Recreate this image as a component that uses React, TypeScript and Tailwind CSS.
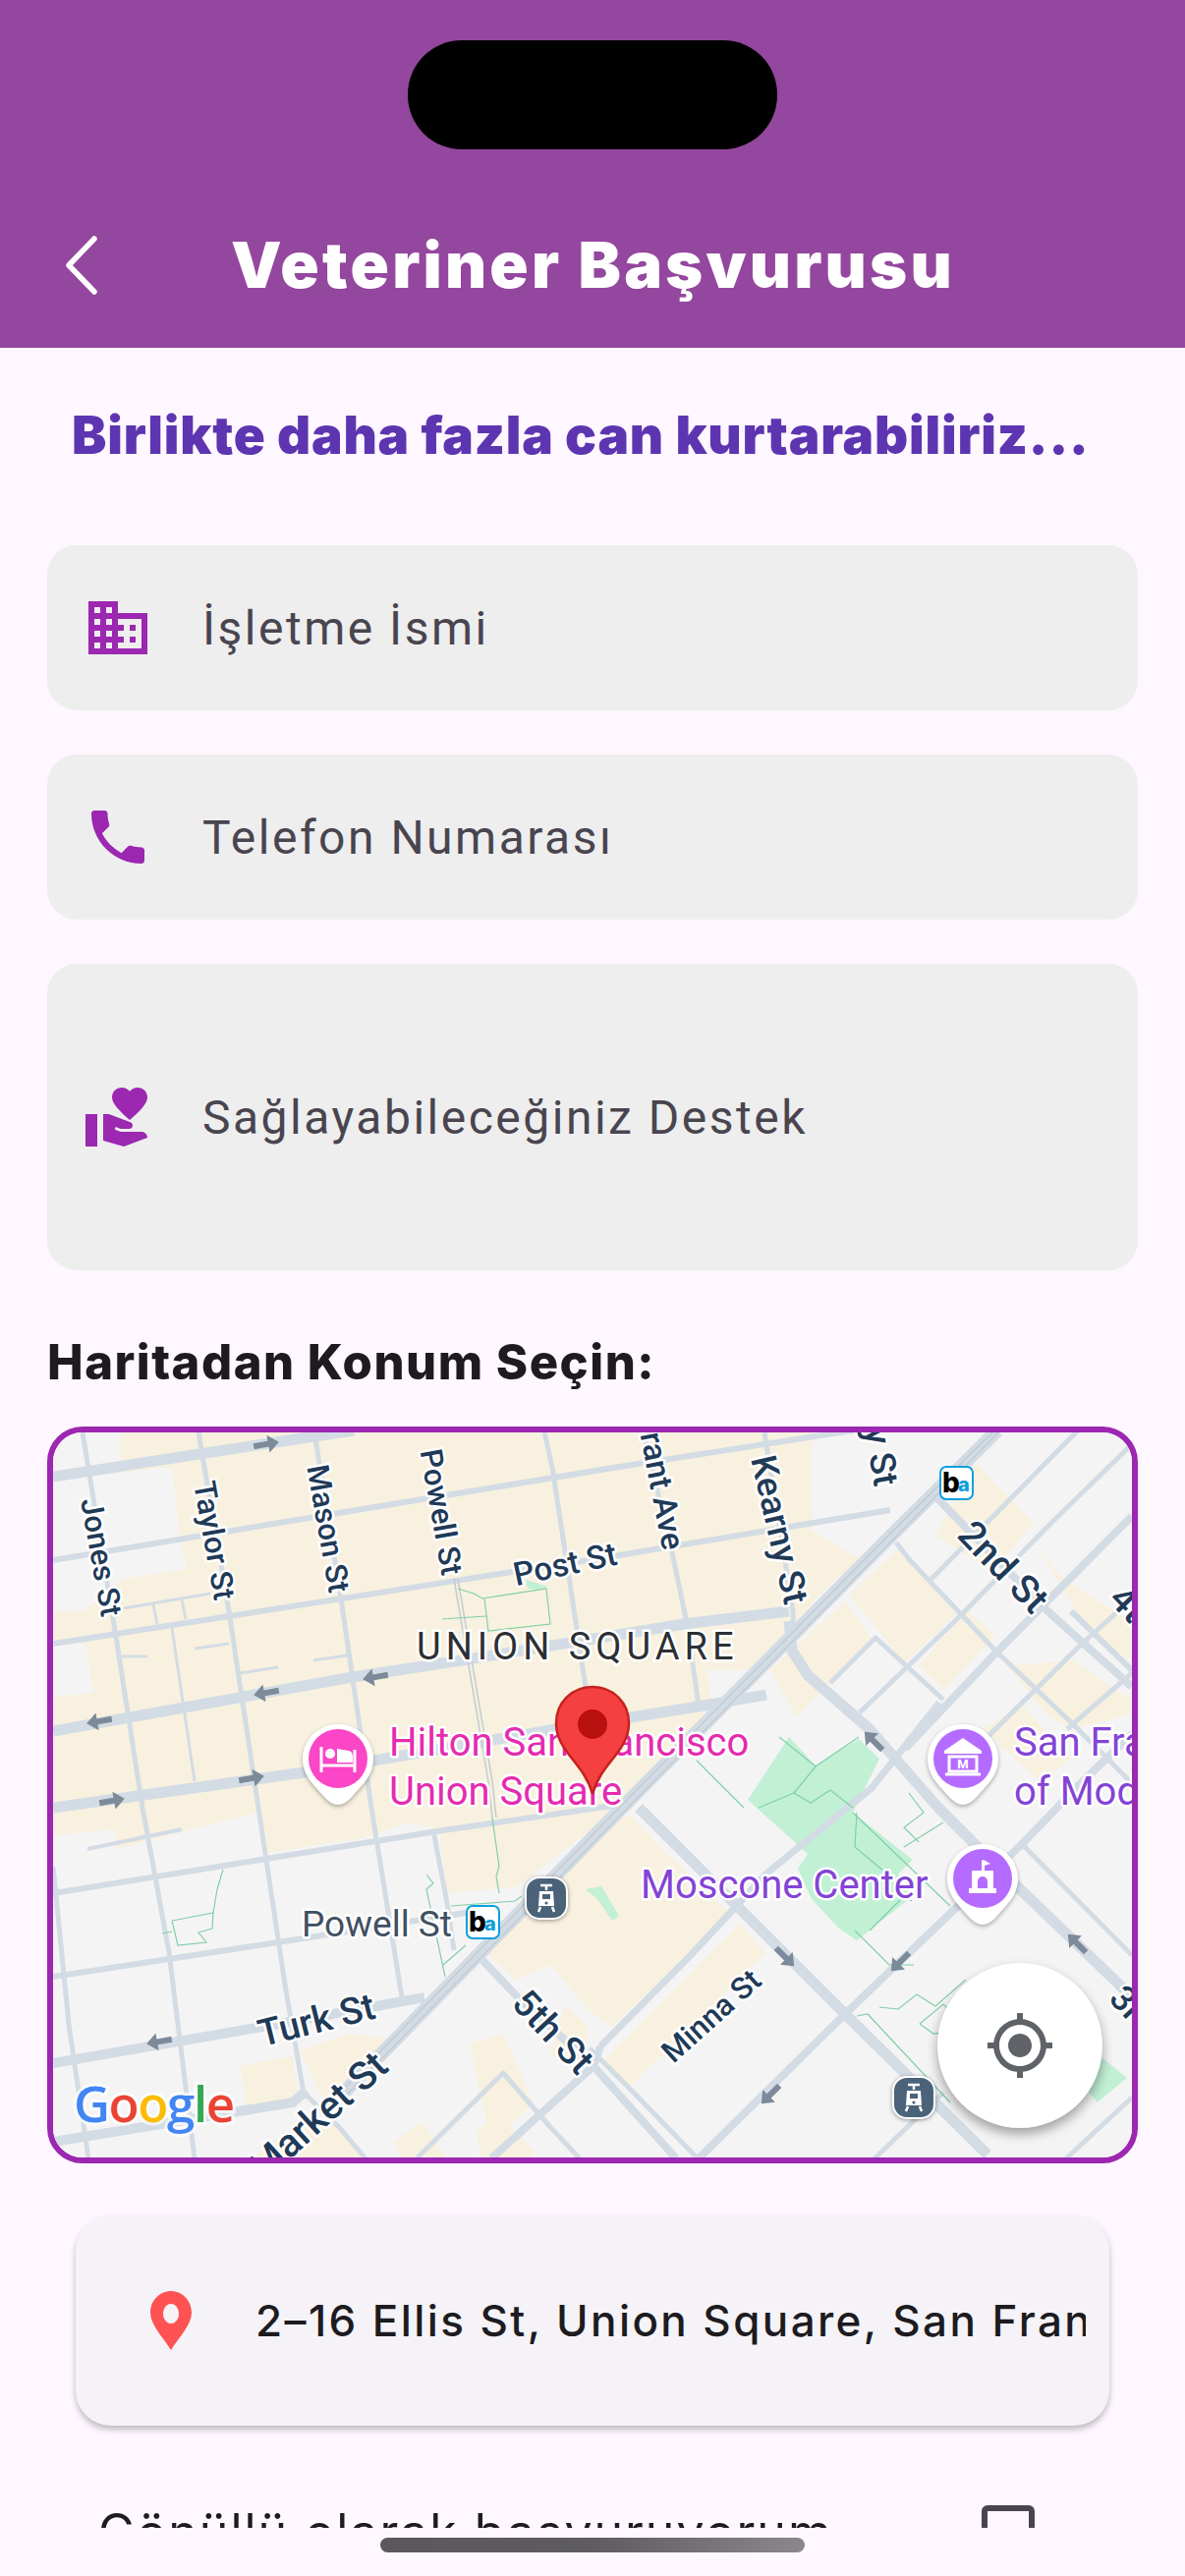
import React from 'react';

// Map data is in page pixels, the svg viewBox is the inner rect of the map frame.
type Pt = [number, number];

const BEIGE: Pt[][] = [
  [[122,1458],[640,1458],[826,1458],[826,1557],[875,1587],[830,1627],[784,1700],[720,1700],[725,1745],[630,1840],[527,1920],[455,1927],[447,1863],[416,1855],[374,1870],[267,1887],[262,1845],[118,1882],[118,1862],[54,1868],[54,1727],[95,1723],[87,1673],[54,1673],[54,1640],[84,1640],[126,1607],[190,1597],[183,1563],[175,1493],[54,1507],[54,1500],[122,1490]],
  [[784,1700],[860,1630],[887,1667],[845,1713],[810,1747]],
  [[864,1623],[914,1577],[973,1643],[921,1693]],
  [[994,1490],[1052,1550],[1010,1600],[952,1563]],
  [[1055,1573],[1082,1607],[1151,1650],[1151,1690],[1110,1665]],
  [[985,1640],[1013,1665],[960,1720],[935,1695]],
  [[1025,1695],[1092,1690],[1151,1730],[1151,1745],[1090,1760],[1065,1745]],
  [[1000,1760],[1040,1735],[1090,1790],[1060,1815]],
  [[497,1990],[630,1850],[642,1848],[673,1880],[742,1947],[707,1983],[623,2063],[600,2047],[560,2000],[525,2015]],
  [[753,1958],[780,1987],[640,2125],[615,2097]],
  [[244,2103],[298,2093],[304,2140],[252,2153]],
  [[305,2087],[355,2070],[400,2075],[330,2140]],
  [[252,2197],[336,2153],[374,2197]],
  [[478,2080],[512,2070],[543,2140],[500,2183]],
  [[485,2170],[505,2150],[545,2190],[540,2197],[490,2197]],
  [[400,2180],[430,2160],[455,2197],[410,2197]],
  [[575,2040],[600,2065],[590,2110],[560,2090]],
];

const PARKS: Pt[][] = [
  [[761,1832],[803,1768],[830,1797],[874,1770],[895,1790],[868,1845],[929,1893],[914,1907],[929,1930],[872,1975],[853,1962],[826,1933],[812,1902],[822,1887],[790,1858]],
  [[1120,2093],[1147,2115],[1117,2140],[1100,2120]],
  [[535,1608],[558,1615],[547,1618],[537,1617]],
  [[596,1923],[612,1920],[630,1950],[623,1955],[608,1933]],
];

const ROADS: { w: number; pts: Pt[] }[] = [
  // east-west, left grid
  { w: 11, pts: [[54,1503],[267,1470],[360,1456]] },
  { w: 6, pts: [[54,1588],[630,1493],[868,1456]] },
  { w: 6, pts: [[54,1673],[630,1583],[906,1537]] },
  { w: 11, pts: [[54,1762],[359,1707],[470,1690],[696,1653],[803,1640]] },
  { w: 11, pts: [[54,1840],[317,1803],[566,1760],[711,1737],[780,1725]] },
  { w: 6, pts: [[54,1927],[451,1863],[630,1837]] },
  { w: 6, pts: [[54,2012],[283,1977],[474,1947]] },
  { w: 10, pts: [[54,2100],[267,2063],[432,2033]] },
  { w: 10, pts: [[54,2180],[298,2140],[312,2128]] },
  // alleys
  { w: 3, pts: [[126,1637],[214,1622]] },
  { w: 3, pts: [[124,1686],[150,1686]] },
  { w: 3, pts: [[198,1678],[233,1673]] },
  { w: 3, pts: [[244,1703],[283,1697]] },
  { w: 3, pts: [[319,1690],[353,1685]] },
  { w: 4, pts: [[89,1882],[185,1862]] },
  { w: 3, pts: [[175,1657],[198,1813]] },
  { w: 3, pts: [[156,1633],[160,1653]] },
  { w: 3, pts: [[185,1628],[189,1648]] },
  // north-south, left grid
  { w: 5, pts: [[84,1458],[116,1653],[145,1840],[172,1987],[198,2197]] },
  { w: 5, pts: [[202,1458],[233,1640],[263,1840],[290,2020],[309,2130],[345,2165],[372,2197]] },
  { w: 5, pts: [[320,1458],[347,1627],[378,1840],[409,2033],[414,2040]] },
  { w: 5, pts: [[441,1863],[455,1937],[462,1985]] },
  { w: 5, pts: [[554,1458],[562,1493],[596,1717]] },
  { w: 5, pts: [[655,1458],[684,1580],[700,1657],[711,1737],[716,1740]] },
  { w: 5, pts: [[54,1900],[70,2060],[90,2197]] },
  // Kearny curling into the thick diagonal
  { w: 5, pts: [[778,1458],[807,1640],[808,1680]] },
  { w: 11, pts: [[803,1650],[806,1680],[822,1705],[885,1760],[955,1840],[1032,1917],[1136,2017],[1152,2033]] },
  { w: 11, pts: [[650,1840],[860,2050],[1005,2193]] },
  // north-east diagonals
  { w: 5, pts: [[948,1607],[1097,1456]] },
  { w: 5, pts: [[845,1713],[891,1667],[960,1730]] },
  { w: 5, pts: [[875,1743],[975,1647],[1070,1550],[1152,1470]] },
  { w: 8, pts: [[921,1780],[1013,1683],[1152,1543]] },
  { w: 5, pts: [[1006,1767],[1097,1677],[1152,1627]] },
  { w: 5, pts: [[1086,1760],[1152,1703]] },
  { w: 7, pts: [[611,2083],[703,1990],[780,1907],[887,1820],[956,1733]] },
  { w: 8, pts: [[711,2197],[860,2050],[975,1940],[1040,1877],[1100,1815],[1152,1765]] },
  { w: 8, pts: [[500,2197],[604,2103],[611,2083]] },
  { w: 5, pts: [[424,2197],[512,2110],[560,2165],[590,2197]] },
  { w: 5, pts: [[890,2197],[960,2130]] },
  { w: 5, pts: [[1085,2197],[1152,2135]] },
  // north-west diagonals
  { w: 5, pts: [[912,1570],[925,1587],[1013,1680],[1090,1753],[1152,1815]] },
  { w: 8, pts: [[952,1523],[1063,1637],[1152,1717]] },
  { w: 6, pts: [[1090,1640],[1152,1700]] },
  { w: 8, pts: [[489,1993],[527,2033],[604,2103],[688,2197]] },
  { w: 5, pts: [[600,2085],[640,2125],[710,2197]] },
  { w: 5, pts: [[1040,1877],[1152,1990]] },
  // Market St
  { w: 14, pts: [[340,2140],[630,1843],[906,1564],[1015,1456]] },
];

const RAILS: Pt[][] = [
  [[340,2136],[630,1840],[906,1561],[1012,1456]],
  [[345,2140],[634,1845],[910,1566],[1018,1456]],
  [[462,1607],[497,1813],[501,1850]],
  [[466,1607],[501,1813],[505,1850]],
];

const PATHS: Pt[][] = [
  [[466,1617],[482,1622],[491,1627],[556,1617],[560,1653],[497,1660],[493,1627]],
  [[450,1648],[495,1645]],
  [[175,1955],[217,1947],[216,1963],[202,1967],[210,1977],[181,1980],[175,1955]],
  [[217,1947],[221,1923],[227,1903]],
  [[165,1968],[175,1966]],
  [[434,1908],[441,1917],[434,1923],[453,2012]],
  [[459,1940],[524,1935],[531,1930]],
  [[451,2000],[474,1980]],
  [[501,1850],[508,1900],[505,1910],[508,1927]],
  [[709,1792],[757,1840]],
  [[793,1768],[830,1798],[874,1768]],
  [[830,1798],[808,1825],[825,1835],[845,1822],[868,1840]],
  [[772,1840],[808,1825]],
  [[868,1845],[967,1940]],
  [[872,1845],[870,1880],[900,1905]],
  [[920,1880],[960,1855]],
  [[925,1825],[940,1845],[920,1860],[935,1875]],
  [[870,1965],[905,2000],[930,2000]],
  [[885,1965],[920,1930],[928,1935]],
  [[872,2052],[883,2050],[967,2140]],
  [[895,2043],[914,2045],[933,2030],[952,2042],[983,2015]],
  [[936,2060],[950,2070],[985,2065],[960,2040],[936,2060]],
];

const ARROWS: [number, number, number][] = [
  [271,1470,-10],[382,1707,170],[271,1723,170],[101,1752,170],[256,1810,-10],[114,1833,-10],
  [162,2078,170],[889,1772,225],[1096,1978,225],[799,1992,45],[916,1997,135],[784,2132,135],
];

const LABELS: { t: string; x: number; y: number; r: number; s: number; end?: boolean }[] = [
  { t: 'Jones St', x: 103, y: 1585, r: 80, s: 31 },
  { t: 'Taylor St', x: 218, y: 1568, r: 80, s: 31 },
  { t: 'Mason St', x: 334, y: 1556, r: 80, s: 31 },
  { t: 'Powell St', x: 449, y: 1539, r: 80, s: 31 },
  { t: 'Post St', x: 575, y: 1592, r: -12, s: 33 },
  { t: 'Grant Ave', x: 686, y: 1577, r: 79, s: 33, end: true },
  { t: 'Kearny St', x: 793, y: 1557, r: 77, s: 36 },
  { t: 'Montgomery St', x: 902, y: 1512, r: 80, s: 36, end: true },
  { t: '2nd St', x: 1021, y: 1595, r: 46, s: 39 },
  { t: '4th St', x: 1136, y: 1620, r: 46, s: 38, end: false },
  { t: 'Turk St', x: 322, y: 2056, r: -14, s: 38 },
  { t: 'Market St', x: 388, y: 2096, r: -42, s: 40, end: true },
  { t: '5th St', x: 563, y: 2068, r: 47, s: 38 },
  { t: 'Minna St', x: 724, y: 2052, r: -42, s: 31 },
  { t: '3rd St', x: 1136, y: 2027, r: 47, s: 36, end: false },
];

const line = (pts: Pt[]) => pts.map(p => p.join(',')).join(' ');

const PIN_SHAPE =
  'M0 -35C20 -35 36 -19 36 0C36 18 24 27 15 38Q7 47 0 47Q-7 47 -15 38C-24 27 -36 18 -36 0C-36 -19 -20 -35 0 -35Z';

function Poi({ x, y, fill, children }: { x: number; y: number; fill: string; children: React.ReactNode }) {
  return (
    <g transform={`translate(${x} ${y})`}>
      <path d={PIN_SHAPE} fill="#fff" className="[filter:drop-shadow(0_2px_2px_rgba(0,0,0,0.3))]" />
      <circle r="30" cy="0" fill={fill} />
      {children}
    </g>
  );
}

function Bart({ x, y }: { x: number; y: number }) {
  return (
    <g transform={`translate(${x} ${y})`}>
      <rect x="1" y="1" width="33" height="33" rx="6" fill="#fff" stroke="#0b9fdc" strokeWidth="2" />
      <text x="3" y="27" fontSize="28" fontWeight="800" fill="#000" className="font-['Inter',sans-serif]">b</text>
      <text x="19" y="26" fontSize="20" fontWeight="800" fill="#0b9fdc" className="font-['Inter',sans-serif]">a</text>
    </g>
  );
}

function Tram({ x, y }: { x: number; y: number }) {
  return (
    <g transform={`translate(${x} ${y})`}>
      <rect x="1" y="1" width="42" height="42" rx="14" fill="#4b6379" stroke="#fff" strokeWidth="2" className="[filter:drop-shadow(0_1px_2px_rgba(0,0,0,0.4))]" />
      <path d="M16 9h12M22 9v5" fill="none" stroke="#fff" strokeWidth="2.5" />
      <path d="M15 15h14l1 15H14z" fill="#fff" />
      <rect x="18" y="18" width="8" height="5" fill="#4b6379" />
      <circle cx="22" cy="27" r="1.6" fill="#4b6379" />
      <path d="M16 31l-2 5M28 31l2 5" stroke="#fff" strokeWidth="2.5" />
    </g>
  );
}

function MapCanvas() {
  return (
    <svg viewBox="54 1458 1098 738" className="block w-full h-full font-['Roboto',sans-serif]">
      <rect x="54" y="1458" width="1098" height="738" fill="#f5f4f5" />
      {BEIGE.map((p, i) => <polygon key={i} points={line(p)} fill="#f8f1df" />)}
      {PARKS.map((p, i) => <polygon key={i} points={line(p)} fill="#c1f0d5" />)}
      {ROADS.map((r, i) => (
        <polyline key={i} points={line(r.pts)} fill="none" stroke="#d3dce4" strokeWidth={r.w} strokeLinejoin="round" />
      ))}
      {RAILS.map((p, i) => <polyline key={i} points={line(p)} fill="none" stroke="#c3cbd3" strokeWidth="1.5" />)}
      {PATHS.map((p, i) => <polyline key={i} points={line(p)} fill="none" stroke="#82cfa9" strokeWidth="1.2" />)}
      {ARROWS.map(([x, y, r], i) => (
        <path key={i} transform={`translate(${x} ${y}) rotate(${r})`} d="M-13 -3H2V-9L13 0L2 9V3H-13Z" fill="#7c8a99" />
      ))}

      {LABELS.map(l => (
        <text
          key={l.t}
          transform={`translate(${l.x} ${l.y}) rotate(${l.r})`}
          textAnchor={l.end === undefined ? 'middle' : l.end ? 'end' : 'start'}
          dominantBaseline="central"
          fontSize={l.s}
          fontWeight="500"
          fill="#1f3a57"
          stroke="#fff"
          strokeWidth="5"
          paintOrder="stroke"
          strokeLinejoin="round"
        >
          {l.t}
        </text>
      ))}

      <text x="424" y="1689" fontSize="38" letterSpacing="5" fill="#2d2f33" stroke="#fff" strokeWidth="5" paintOrder="stroke">UNION SQUARE</text>

      <g fontSize="40" stroke="#fff" strokeWidth="5" paintOrder="stroke" strokeLinejoin="round">
        <g fill="#e52bb0">
          <text x="396" y="1787">Hilton San Francisco</text>
          <text x="396" y="1837">Union Square</text>
        </g>
        <g fill="#8443d6">
          <text x="1032" y="1787">San Francisco Museum</text>
          <text x="1032" y="1837">of Modern Art</text>
          <text x="652" y="1932">Moscone Center</text>
        </g>
        <text x="307" y="1971" fontSize="37" fill="#3f5061">Powell St</text>
      </g>

      <Poi x={344} y={1790} fill="#fa46c7">
        <path d="M-17 -12V14M17 -9V14M-17 7H17" stroke="#fff" strokeWidth="3" fill="none" />
        <circle cx="-8" cy="-5" r="5" fill="#fff" />
        <path d="M-1 -10L11 -8Q15 -7 15 -2V4H-1Z" fill="#fff" />
      </Poi>
      <Poi x={980} y={1790} fill="#b56bff">
        <path d="M0 -21L19 -8V-5H-19V-8Z" fill="#fff" />
        <path d="M-14 -2H14V13H-14Z" fill="none" stroke="#fff" strokeWidth="3" />
        <path d="M-18 16H18" stroke="#fff" strokeWidth="3" />
        <text x="0" y="10" textAnchor="middle" fontSize="13" fontWeight="800" fill="#fff">M</text>
      </Poi>
      <Poi x={1000} y={1912} fill="#b56bff">
        <path d="M-1 -18V-8H-11V10H-14V15H14V10H11V-8H2V-13L8 -15L1 -19Z" fill="#fff" />
        <path d="M-5 10V3A5 5 0 0 1 5 3V10Z" fill="#b56bff" />
      </Poi>

      <Bart x={956} y={1492} />
      <Bart x={474} y={1939} />
      <Tram x={534} y={1910} />
      <Tram x={908} y={2113} />

      <g transform="translate(603 1755)">
        <path d="M0 -38C21 -38 37 -22 37 -1C37 28 8 40 0 71C-8 40 -37 28 -37 -1C-37 -22 -21 -38 0 -38Z" fill="#f44040" stroke="#c5221f" strokeWidth="2.5" />
        <circle r="15" fill="#b91010" />
      </g>

      <text x="75" y="2160" fontSize="51" fontWeight="600" stroke="#fff" strokeOpacity="0.7" strokeWidth="6" paintOrder="stroke" letterSpacing="-1.4" className="font-['Open_Sans',sans-serif]">
        <tspan fill="#4285f4">G</tspan>
        <tspan fill="#ea4335">o</tspan>
        <tspan fill="#fbbc05">o</tspan>
        <tspan fill="#4285f4">g</tspan>
        <tspan fill="#34a853">l</tspan>
        <tspan fill="#ea4335">e</tspan>
      </text>
    </svg>
  );
}

function Field({ label, icon, tall }: { label: string; icon: string; tall?: boolean }) {
  return (
    <div className={`flex items-center pl-[36px] gap-[50px] rounded-[30px] bg-[#eeeeee] ${tall ? 'h-[312px]' : 'h-[168px]'}`}>
      <svg viewBox="0 0 24 24" className="w-[72px] h-[72px] shrink-0 fill-[#9c27b0]">
        <path d={icon} />
      </svg>
      <span className="pt-[2px] font-['Roboto',sans-serif] text-[48px] tracking-[2.5px] text-[#49454f] leading-none">{label}</span>
    </div>
  );
}

const ICON_DOMAIN =
  'M12 7V3H2v18h20V7H12zM6 19H4v-2h2v2zm0-4H4v-2h2v2zm0-4H4V9h2v2zm0-4H4V5h2v2zm4 12H8v-2h2v2zm0-4H8v-2h2v2zm0-4H8V9h2v2zm0-4H8V5h2v2zm10 12h-8v-2h2v-2h-2v-2h2v-2h-2V9h8v10zm-2-8h-2v2h2v-2zm0 4h-2v2h2v-2z';
const ICON_PHONE =
  'M6.62 10.79c1.44 2.83 3.76 5.14 6.59 6.59l2.2-2.2c.27-.27.67-.36 1.02-.24 1.12.37 2.33.57 3.57.57.55 0 1 .45 1 1V20c0 .55-.45 1-1 1-9.39 0-17-7.61-17-17 0-.55.45-1 1-1h3.5c.55 0 1 .45 1 1 0 1.25.2 2.45.57 3.57.11.35.03.74-.25 1.02l-2.2 2.2z';
const ICON_SUPPORT =
  'M1 11h4v11H1zm15-7.75C16.65 2.49 17.66 2 18.7 2 20.55 2 22 3.45 22 5.3c0 2.27-2.91 4.9-6 7.7-3.09-2.81-6-5.44-6-7.7C10 3.45 11.45 2 13.3 2c1.04 0 2.05.49 2.7 1.25zM20 17h-7l-2.09-.73.33-.94L13 16h2.82c.65 0 1.18-.53 1.18-1.18 0-.49-.31-.93-.77-1.11L8.97 11H7v9.02L14 22l8.01-3c-.01-1.1-.9-2-2.01-2z';
const ICON_TARGET =
  'M12 8c-2.21 0-4 1.79-4 4s1.79 4 4 4 4-1.79 4-4-1.79-4-4-4zm8.94 3c-.46-4.17-3.77-7.48-7.94-7.94V1h-2v2.06C6.83 3.52 3.52 6.83 3.06 11H1v2h2.06c.46 4.17 3.77 7.48 7.94 7.94V23h2v-2.06c4.17-.46 7.48-3.77 7.94-7.94H23v-2h-2.06zM12 19c-3.87 0-7-3.13-7-7s3.13-7 7-7 7 3.13 7 7-3.13 7-7 7z';

export default function App() {
  return (
    <div className="relative w-[1206px] h-[2622px] overflow-hidden bg-[#fef7ff] flex flex-col">
      {/* Header + camera cutout */}
      <header className="relative h-[354px] shrink-0 bg-[#94479e]">
        <div className="absolute left-[415px] top-[41px] w-[376px] h-[111px] rounded-[55px] bg-black" />
        <svg viewBox="0 0 40 64" className="absolute left-[62px] top-[238px] w-[40px] h-[64px]">
          <path d="M34 5L8 32L34 59" fill="none" stroke="#fff" strokeWidth="5.5" strokeLinecap="round" strokeLinejoin="round" />
        </svg>
        <div className="absolute left-[235px] top-[232px] font-['Inter',sans-serif] font-black text-[65px] leading-[76px] tracking-[3.2px] text-white whitespace-nowrap">
          Veteriner Başvurusu
        </div>
      </header>

      <main className="h-[2219px] shrink-0 overflow-hidden px-[48px]">
        <h2 className="ml-[25px] pt-[59px] mb-[82px] font-['Inter',sans-serif] font-black text-[53px] leading-[60px] tracking-[0.8px] text-[#5e35b1] whitespace-nowrap">
          Birlikte daha fazla can kurtarabiliriz...
        </h2>

        <div className="flex flex-col gap-[45px]">
          <Field label="İşletme İsmi" icon={ICON_DOMAIN} />
          <Field label="Telefon Numarası" icon={ICON_PHONE} />
          <Field label="Sağlayabileceğiniz Destek" icon={ICON_SUPPORT} tall />
        </div>

        <h3 className="mt-[64px] font-['Inter',sans-serif] font-extrabold text-[49px] leading-[60px] tracking-[1.5px] text-[#1d1b20] whitespace-nowrap">
          Haritadan Konum Seçin:
        </h3>

        <div className="relative mt-[35px] h-[750px] rounded-[36px] border-[6px] border-[#9c27b0] overflow-hidden">
          <MapCanvas />
          <button className="absolute left-[900px] top-[540px] w-[168px] h-[168px] rounded-full bg-white flex items-center justify-center shadow-[0_6px_12px_rgba(0,0,0,0.35)]">
            <svg viewBox="0 0 24 24" className="w-[72px] h-[72px] fill-[#5f6368]">
              <path d={ICON_TARGET} />
            </svg>
          </button>
        </div>

        <div className="mt-[53px] mx-[29px] h-[214px] rounded-[36px] bg-[#f5f3f8] shadow-[0_4px_6px_rgba(0,0,0,0.25)] flex items-center pl-[76px] pr-[24px] gap-[65px]">
          <svg viewBox="0 0 42 60" className="w-[42px] h-[60px] shrink-0">
            <path fillRule="evenodd" fill="#ff5252" d="M21 0C32 0 42 9 42 22C42 34 30 46 21 60C12 46 0 34 0 22C0 9 10 0 21 0ZM21 13a8 10 0 1 0 .01 0Z" />
          </svg>
          <div className="overflow-hidden whitespace-nowrap font-['Inter',sans-serif] font-medium text-[44px] leading-[60px] tracking-[2.4px] text-[#1d1b20]">
            2–16 Ellis St, Union Square, San Francisco, CA 94102, USA
          </div>
        </div>

        <div className="mt-[81px] flex items-start pl-[52px] pr-[105px] justify-between">
          <span className="font-['Inter',sans-serif] text-[50px] leading-[54px] tracking-[2px] text-[#1d1b20]">Gönüllü olarak başvuruyorum</span>
          <span className="w-[54px] h-[54px] rounded-[6px] border-[6px] border-[#49454f]" />
        </div>
      </main>

      <div className="flex-1 flex justify-center pt-[10px]">
        <div className="w-[432px] h-[15px] rounded-[8px] bg-gradient-to-r from-[#5a585c] via-[#5e5c60] to-[#8a888c]" />
      </div>
    </div>
  );
}
